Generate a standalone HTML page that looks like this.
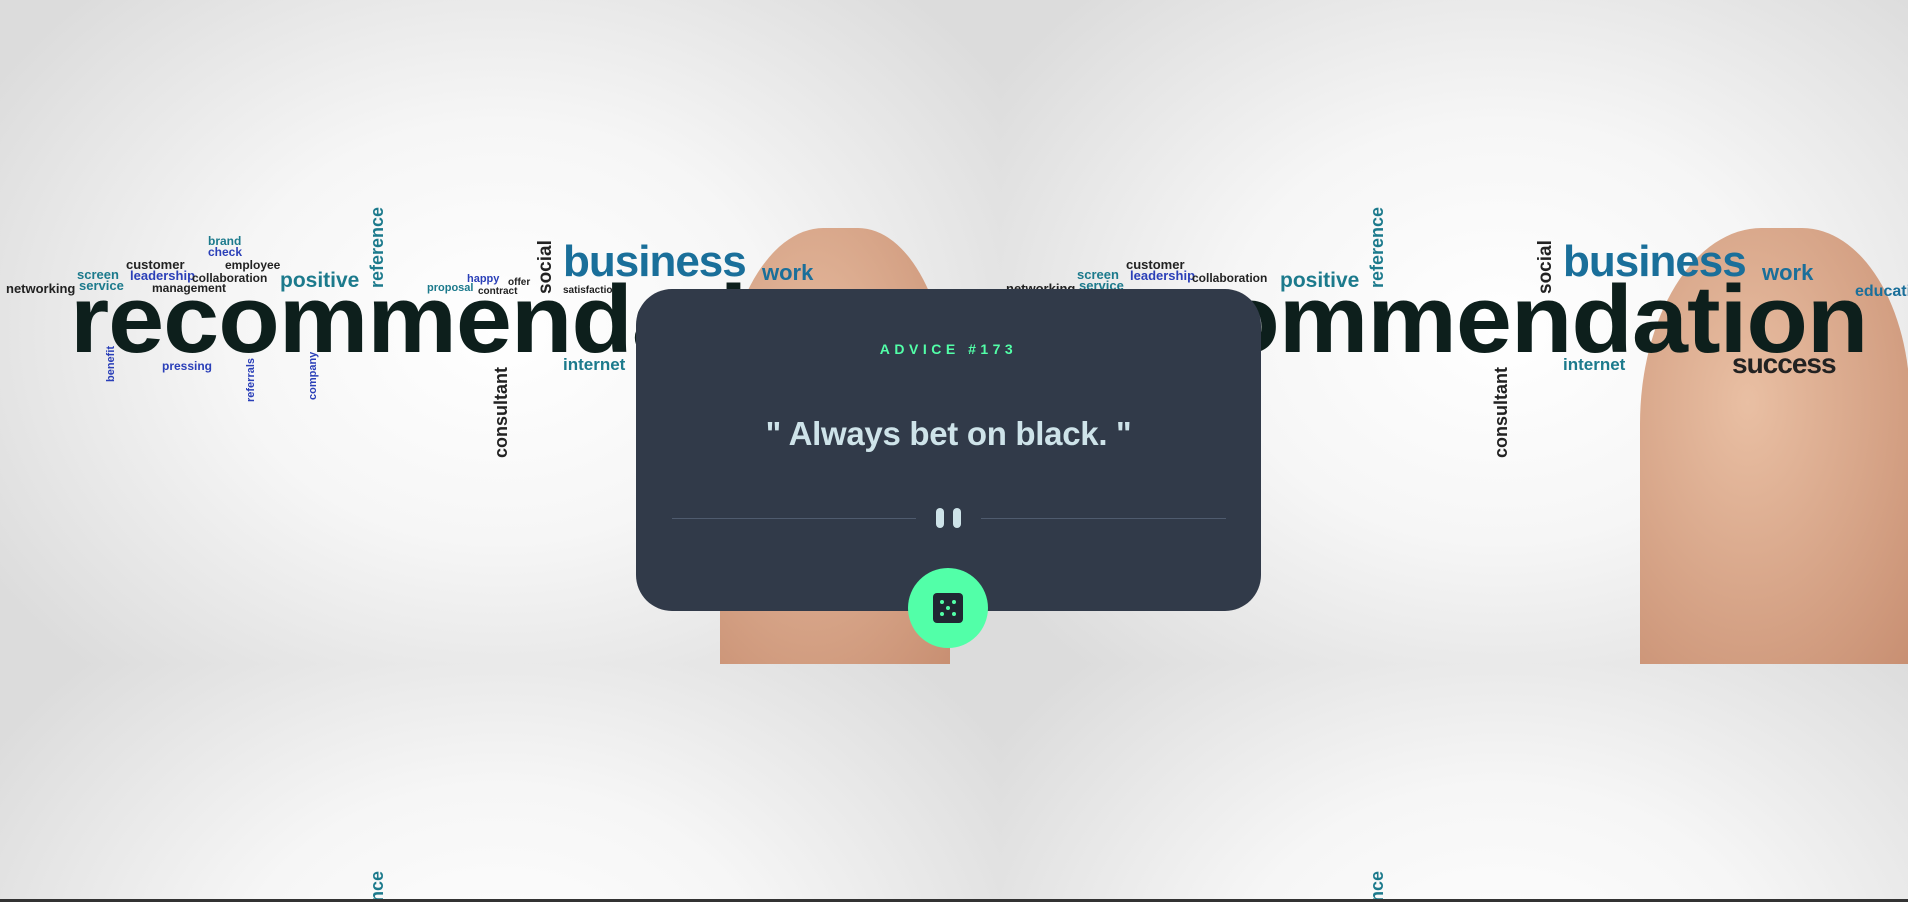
<!DOCTYPE html>
<html style="width:1908px;height:902px;overflow:hidden"><head><meta charset="utf-8"><style>
*{margin:0;padding:0;box-sizing:border-box}
body{width:1908px;height:902px;overflow:hidden;position:relative;font-family:"Liberation Sans",sans-serif;background:#ddd}
.tile{position:absolute;width:1000px;height:664px;background:radial-gradient(ellipse 60% 70% at 50% 50%,#fff 0%,#f6f6f6 45%,#dcdcdc 100%);background-size:1000px 664px;background-repeat:no-repeat;overflow:hidden}
.tile span{position:absolute;font-weight:bold;white-space:nowrap;line-height:1}
.v{transform:rotate(-90deg);transform-origin:left top}
.big{font-size:96px;color:#0d1f1c;letter-spacing:-1px;transform:scaleX(1.05);transform-origin:left}
.t{color:#1c7a8c}.b{color:#2a3fb8}.d{color:#222}
.hand{position:absolute;background:radial-gradient(ellipse at 40% 40%,#e9bfa3,#c88f72);border-radius:45% 40% 0 0}
.card{position:absolute;left:636px;top:289px;width:625px;height:322px;background:#313a49;border-radius:36px;text-align:center}
.adv{position:absolute;top:52px;width:100%;color:#52ffa8;font-size:14px;font-weight:bold;letter-spacing:4.5px}
.q{position:absolute;top:126px;width:100%;color:#cee3e9;font-size:33px;font-weight:bold;letter-spacing:-0.3px}
.ln{position:absolute;top:229px;height:1px;background:#4f5b6e}
.bar{position:absolute;top:219px;width:8px;height:20px;border-radius:4px;background:#cee3e9}
.btn{position:absolute;left:908px;top:568px;width:80px;height:80px;border-radius:50%;background:#52ffa8}
</style></head><body>

<div class="tile" style="left:0;top:0">
 <div class="hand" style="left:720px;top:228px;width:230px;height:436px"></div>
 <span class="d" style="left:6px;top:282px;font-size:13px">networking</span>
 <span class="t" style="left:77px;top:268px;font-size:13px">screen</span>
 <span class="t" style="left:79px;top:279px;font-size:13px">service</span>
 <span class="d" style="left:126px;top:258px;font-size:13px">customer</span>
 <span class="b" style="left:130px;top:269px;font-size:13px">leadership</span>
 <span class="d" style="left:192px;top:272px;font-size:12px">collaboration</span>
 <span class="d" style="left:152px;top:282px;font-size:12px">management</span>
 <span class="t" style="left:208px;top:235px;font-size:12px">brand</span>
 <span class="b" style="left:208px;top:246px;font-size:12px">check</span>
 <span class="d" style="left:225px;top:259px;font-size:12px">employee</span>
 <span class="t" style="left:280px;top:270px;font-size:21px">positive</span>
 <span class="t v" style="left:368px;top:288px;font-size:18px">reference</span>
 <span class="t" style="left:427px;top:283px;font-size:11px">proposal</span>
 <span class="b" style="left:467px;top:274px;font-size:11px">happy</span>
 <span class="d" style="left:478px;top:287px;font-size:10px">contract</span>
 <span class="d" style="left:508px;top:278px;font-size:10px">offer</span>
 <span class="d v" style="left:536px;top:294px;font-size:19px">social</span>
 <span class="t" style="left:563px;top:240px;font-size:44px;letter-spacing:-1px;color:#1a6f9a">business</span>
 <span class="t" style="left:762px;top:262px;font-size:22px;color:#1a6f9a">work</span>
 <span class="d" style="left:563px;top:286px;font-size:10px">satisfaction</span>
 <span class="big" style="left:70px;top:272px">recommendation</span>
 <span class="t" style="left:563px;top:356px;font-size:17px">internet</span>
 <span class="b" style="left:162px;top:360px;font-size:12px">pressing</span>
 <span class="b v" style="left:106px;top:382px;font-size:11px">benefit</span>
 <span class="d v" style="left:492px;top:458px;font-size:18px">consultant</span>
 <span class="b v" style="left:246px;top:402px;font-size:11px">referrals</span>
 <span class="b v" style="left:308px;top:400px;font-size:11px">company</span>
</div>
<div class="tile" style="left:1000px;top:0">
 <div class="hand" style="left:640px;top:228px;width:270px;height:436px"></div>
 <span class="d" style="left:6px;top:282px;font-size:13px">networking</span>
 <span class="t" style="left:77px;top:268px;font-size:13px">screen</span>
 <span class="t" style="left:79px;top:279px;font-size:13px">service</span>
 <span class="d" style="left:126px;top:258px;font-size:13px">customer</span>
 <span class="b" style="left:130px;top:269px;font-size:13px">leadership</span>
 <span class="d" style="left:192px;top:272px;font-size:12px">collaboration</span>
 <span class="t" style="left:280px;top:270px;font-size:21px">positive</span>
 <span class="t v" style="left:368px;top:288px;font-size:18px">reference</span>
 <span class="d v" style="left:536px;top:294px;font-size:19px">social</span>
 <span class="t" style="left:563px;top:240px;font-size:44px;letter-spacing:-1px;color:#1a6f9a">business</span>
 <span class="t" style="left:762px;top:262px;font-size:22px;color:#1a6f9a">work</span>
 <span class="t" style="left:855px;top:284px;font-size:16px;color:#1a6f9a">education</span>
 <span class="big" style="left:70px;top:272px">recommendation</span>
 <span class="d" style="left:732px;top:350px;font-size:28px;letter-spacing:-1px">success</span>
 <span class="t" style="left:563px;top:356px;font-size:17px">internet</span>
 <span class="d v" style="left:492px;top:458px;font-size:18px">consultant</span>
</div>
<div class="tile" style="left:0;top:664px;height:238px"><span class="t v" style="left:368px;top:288px;font-size:18px">reference</span></div>
<div class="tile" style="left:1000px;top:664px;height:238px"><span class="t v" style="left:368px;top:288px;font-size:18px">reference</span></div>
<div style="position:absolute;left:0;top:899px;width:1908px;height:3px;background:#333"></div>

<div class="card">
 <div class="adv">ADVICE #173</div>
 <div class="q">" Always bet on black. "</div>
 <div class="ln" style="left:36px;width:244px"></div>
 <div class="ln" style="left:345px;width:245px"></div>
 <div class="bar" style="left:300px"></div>
 <div class="bar" style="left:317px"></div>
</div>
<div class="btn">
 <svg width="30" height="30" viewBox="0 0 30 30" style="position:absolute;left:25px;top:25px">
  <rect width="30" height="30" rx="4" fill="#202733"/>
  <circle cx="9" cy="9" r="2" fill="#52ffa8"/><circle cx="21" cy="9" r="2" fill="#52ffa8"/>
  <circle cx="15" cy="15" r="2" fill="#52ffa8"/>
  <circle cx="9" cy="21" r="2" fill="#52ffa8"/><circle cx="21" cy="21" r="2" fill="#52ffa8"/>
 </svg>
</div>
</body></html>
